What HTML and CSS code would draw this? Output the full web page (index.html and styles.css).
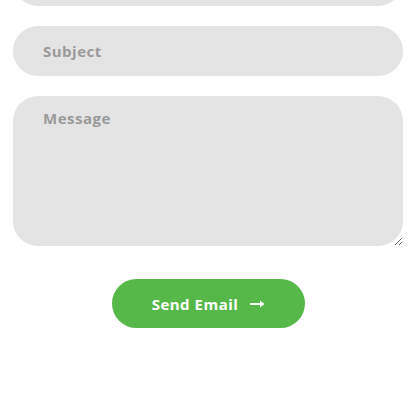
FILE: index.html
```html
<!DOCTYPE html>
<html>
<head>
<meta charset="utf-8">
<link rel="stylesheet" href="styles.css">
</head>
<body>
<form class="form">
  <input class="field" type="text" placeholder="Email">
  <input class="field" type="text" placeholder="Subject">
  <textarea class="field area" placeholder="Message"></textarea>
  <div class="actions">
    <button class="send" type="button">Send Email <svg class="arrow" width="15" height="8" viewBox="0 0 15 8"><path d="M0 4H12" stroke="#fff" stroke-width="2"/><path d="M10 0.5L14.5 4L10 7.5Z" fill="#fff"/></svg></button>
  </div>
</form>
</body>
</html>
```
FILE: styles.css
```css
html, body {
  margin: 0;
  padding: 0;
  background: #fff;
  overflow: hidden;
}
.form {
  display: flex;
  flex-direction: column;
  gap: 20px;
  padding: 0 13px;
  margin-top: -44px;
}
.field {
  box-sizing: border-box;
  width: 390px;
  height: 50px;
  border: none;
  border-radius: 25px;
  background: #e4e4e4;
  padding: 0 30px;
  font-family: "Open Sans", "Liberation Sans", sans-serif;
  font-weight: 700;
  font-size: 15px;
  letter-spacing: 0.5px;
  color: #555;
  outline: none;
  margin: 0;
}
.field::placeholder {
  color: #9a9a9a;
}
.area {
  height: 150px;
  padding: 12px 30px;
  resize: both;
  display: block;
}
.actions {
  display: flex;
  justify-content: center;
  margin-top: 13px;
}
.send {
  width: 193px;
  height: 49px;
  border: none;
  border-radius: 25px;
  background: #56b849;
  color: #fff;
  font-family: "Open Sans", "Liberation Sans", sans-serif;
  font-weight: 700;
  font-size: 15px;
  letter-spacing: 0.5px;
  display: flex;
  align-items: center;
  justify-content: center;
  gap: 12px;
  cursor: pointer;
  padding: 0 0 0 1px;
}
.arrow {
  display: block;
  margin-top: 1px;
}
```
